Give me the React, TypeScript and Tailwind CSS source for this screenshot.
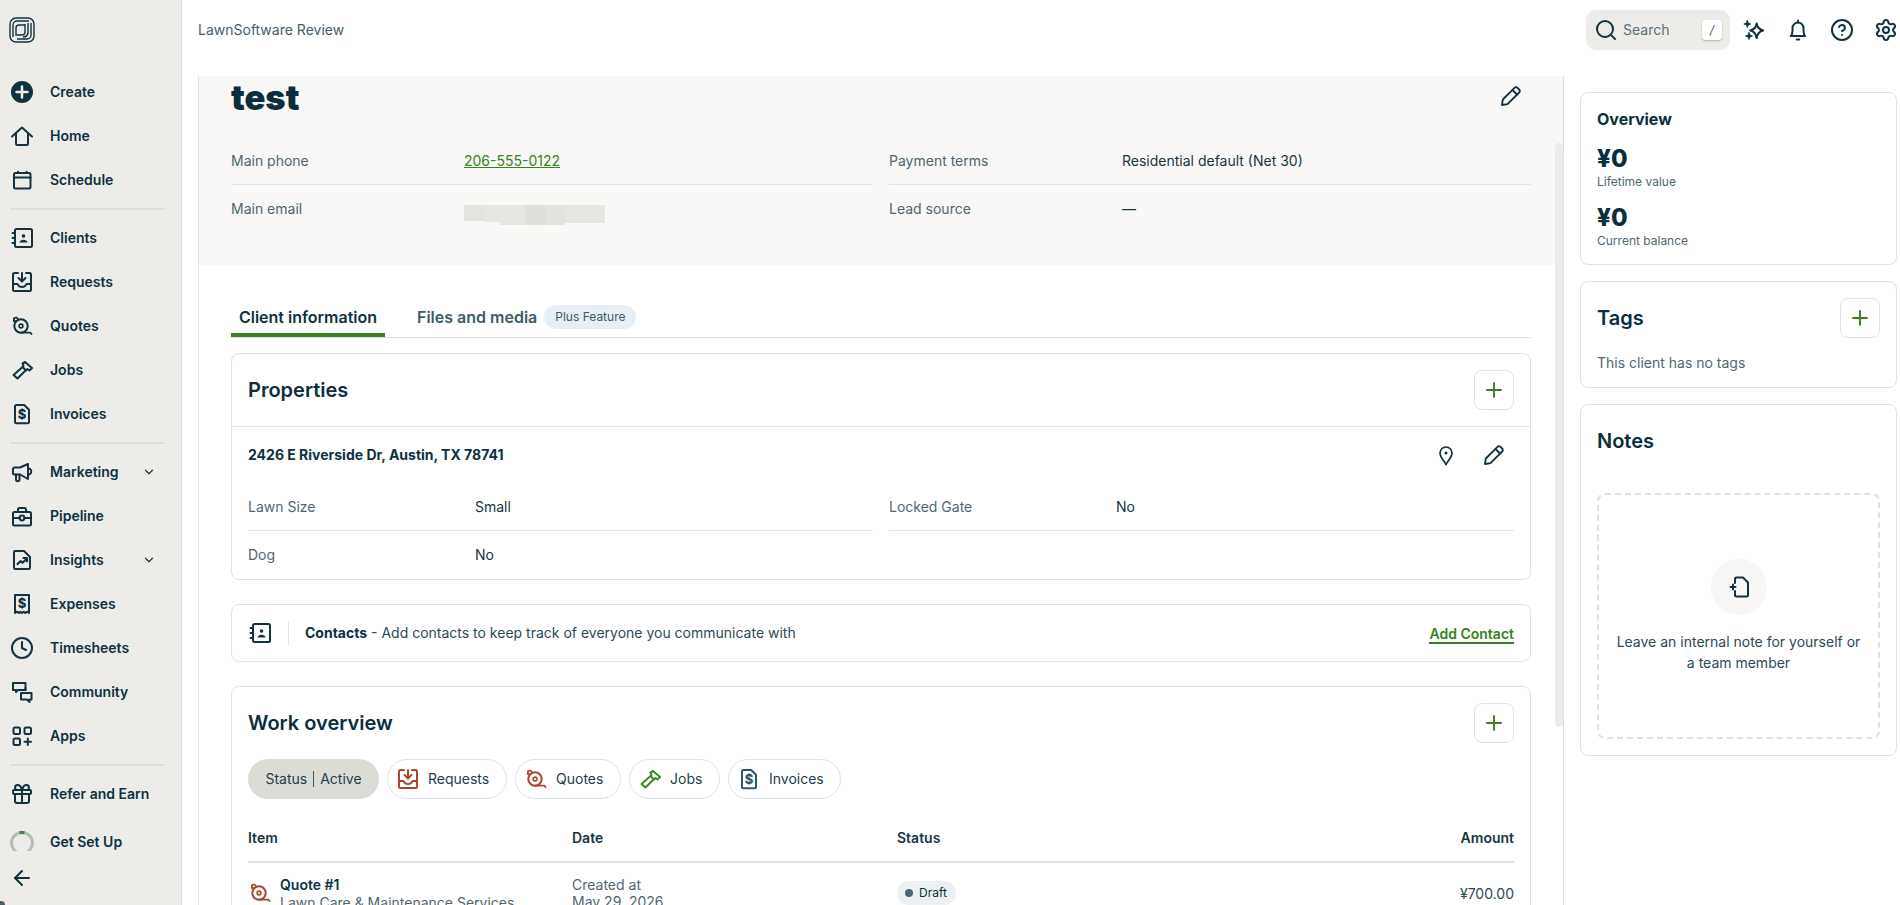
import { ReactNode } from 'react';
import { ChevronDown, CircleHelp, Clock, Gift, Search, Settings, ArrowLeft, Plus } from 'lucide-react';

type IconProps = { className?: string };

function Svg({ className = 'text-[#12323f]', children }: IconProps & { children: ReactNode }) {
  return (
    <svg
      viewBox="0 0 24 24"
      fill="none"
      stroke="currentColor"
      strokeWidth="2"
      strokeLinecap="round"
      strokeLinejoin="round"
      className={`w-6 h-6 shrink-0 ${className}`}
    >
      {children}
    </svg>
  );
}

const CreateIcon = ({ className }: IconProps) => (
  <Svg className={className}>
    <circle cx="12" cy="12" r="10" fill="currentColor" />
    <path d="M12 6.500v11M6.500 12h11" stroke="#edece9" strokeWidth="2.500" />
  </Svg>
);
const HomeIcon = ({ className }: IconProps) => (
  <Svg className={className}>
    <path d="M2 12.500 12 3.500l10 9" />
    <path d="M6 10v9.500A1.500 1.500 0 0 0 7.500 21h9a1.500 1.500 0 0 0 1.500-1.500V10" />
  </Svg>
);
const CalendarIcon = ({ className }: IconProps) => (
  <Svg className={className}>
    <rect x="4" y="5" width="16.500" height="15.500" rx="1.500" />
    <path d="M4 9.500h16.500M8 3.800V5M16.500 3.800V5" />
  </Svg>
);
const ClientsIcon = ({ className }: IconProps) => (
  <Svg className={className}>
    <rect x="5" y="3" width="17" height="18" rx="1.500" />
    <path d="M2.500 7h2M2.500 12h2M2.500 17h2" />
    <circle cx="13.500" cy="10" r="1.800" fill="currentColor" stroke="none" />
    <path d="M9.500 16.500c.4-2 2-2.800 4-2.800s3.600.8 4 2.800z" fill="currentColor" stroke="none" />
  </Svg>
);
const RequestsIcon = ({ className }: IconProps) => (
  <Svg className={className}>
    <path d="M8 3H4.500A1.500 1.500 0 0 0 3 4.500v15A1.500 1.500 0 0 0 4.500 21h15a1.500 1.500 0 0 0 1.500-1.500v-15A1.500 1.500 0 0 0 19.500 3H16" />
    <path d="M12 3v8M8.500 8l3.500 3.500L15.500 8" />
    <path d="M3 14h4.500c.7 2 2.300 3 4.500 3s3.800-1 4.500-3H21" />
  </Svg>
);
const QuotesIcon = ({ className }: IconProps) => (
  <Svg className={className}>
    <circle cx="11" cy="12" r="6.700" />
    <circle cx="11" cy="12" r="1.900" strokeWidth="1.600" />
    <path d="M11 18.700h9.500l1 1.300M6.300 7.200 3.800 7 4 4.200l2.500-.7 1.800 2" strokeWidth="1.800" />
  </Svg>
);
const JobsIcon = ({ className }: IconProps) => (
  <Svg className={className}>
    <path d="m12.500 5.300 2.500-1.300 7 6-2.500 2.500-2-1.500-1.500 1.500-3.500-3.500 1-1.200z" />
    <path d="M12 9.500 3.500 17l4 3.500 8-8" />
  </Svg>
);
const InvoicesIcon = ({ className }: IconProps) => (
  <Svg className={className}>
    <path d="M6.500 3h7.700L19 7.800v12a1.500 1.500 0 0 1-1.500 1.500h-11A1.500 1.500 0 0 1 5 19.800V4.500A1.500 1.500 0 0 1 6.500 3z" />
    <text x="12" y="16.700" textAnchor="middle" fontSize="13" fontWeight="800" fill="currentColor" stroke="none" fontFamily="Inter, sans-serif">$</text>
  </Svg>
);
const MarketingIcon = ({ className }: IconProps) => (
  <Svg className={className}>
    <path d="M3 9A1.500 1.500 0 0 1 4.500 7.500H10l8-3.500v15l-8-4.500H4.500A1.500 1.500 0 0 1 3 13z" />
    <path d="M6 14.500v5a1.700 1.700 0 0 0 3.500 0v-5M18.500 8.500a2.800 2.800 0 0 1 2.700 3 2.800 2.800 0 0 1-2.700 3" />
  </Svg>
);
const PipelineIcon = ({ className }: IconProps) => (
  <Svg className={className}>
    <rect x="3" y="8" width="18" height="13.500" rx="1.500" />
    <path d="M8 8V5.500A1.500 1.500 0 0 1 9.500 4h5A1.500 1.500 0 0 1 16 5.500V8M3 14h6.500M14.500 14H21" />
    <circle cx="12" cy="14" r="2.400" />
  </Svg>
);
const InsightsIcon = ({ className }: IconProps) => (
  <Svg className={className}>
    <path d="M5 3h9l6 6v10.500a1.500 1.500 0 0 1-1.500 1.500H5.500A1.500 1.500 0 0 1 4 19.500V4a1 1 0 0 1 1-1z" />
    <path d="m7.500 16 3-2.800 2 1.500 4.500-4.200M13.500 10h3.500v3.500" strokeWidth="2.200" />
  </Svg>
);
const ExpensesIcon = ({ className }: IconProps) => (
  <Svg className={className}>
    <path d="M5 3h14v18l-2-1.300-1.700 1.300-1.600-1.300-1.700 1.300-1.700-1.300L9 21l-2-1.300L5 21z" />
    <text x="12" y="15.800" textAnchor="middle" fontSize="13" fontWeight="800" fill="currentColor" stroke="none" fontFamily="Inter, sans-serif">$</text>
  </Svg>
);
const CommunityIcon = ({ className }: IconProps) => (
  <Svg className={className}>
    <path d="M3 3h12.500v7H8l-2 2v-2H3z" />
    <path d="M11 13h10.500v6.500H19.500V22l-2.500-2.500h-6z" />
    <path d="M15.500 8v2" />
  </Svg>
);
const AppsIcon = ({ className }: IconProps) => (
  <Svg className={className}>
    <rect x="3.500" y="3.500" width="6.500" height="6.500" rx="1.500" />
    <rect x="14.500" y="3.500" width="6.500" height="6.500" rx="1.500" />
    <rect x="3.500" y="14.500" width="6.500" height="6.500" rx="1.500" />
    <path d="M17.800 14.500v6.500M14.500 17.800H21" />
  </Svg>
);
const PinIcon = () => (
  <Svg>
    <path d="M12 21.500c-1.500-3-6-7-6-11.500a6 6 0 0 1 12 0c0 4.500-4.500 8.500-6 11.500z" strokeWidth="1.700" />
    <circle cx="12" cy="10" r="1.500" fill="currentColor" stroke="none" />
  </Svg>
);
const PencilIcon = () => (
  <Svg>
    <path d="M15.500 3.800a2.100 2.100 0 0 1 3 0l1.700 1.700a2.100 2.100 0 0 1 0 3L8.500 20.200 3 21l.8-5.500z" strokeWidth="1.800" />
    <path d="m13.500 6 4.500 4.500" strokeWidth="1.800" />
  </Svg>
);
const SparkleIcon = () => (
  <Svg>
    <path d="M14.700 5.500c.6 3.700 2.400 6 6.500 7-4.100 1-5.900 3.300-6.500 7.500-.6-4.200-2.400-6.500-6.500-7.500 4.100-1 5.900-3.300 6.500-7z" />
    <path d="m5.300 2.500 1 2.500 2.500 1-2.500 1-1 2.500-1-2.500-2.500-1 2.500-1zM7 14.500l1 2.500 2.500 1-2.500 1-1 2.500-1-2.500-2.500-1 2.500-1z" fill="currentColor" strokeWidth="0.800" />
  </Svg>
);
const BellIcon = () => (
  <Svg>
    <path d="M4.800 18c1.700-1.200 1.700-3.500 1.700-6v-2a5.500 5.500 0 0 1 11 0v2c0 2.500 0 4.800 1.700 6z" />
    <path d="M12 2.500v2M10.800 21.500h2.400" />
  </Svg>
);
const NoteIcon = () => (
  <Svg>
    <path d="M8 8V4a1.500 1.500 0 0 1 1.500-1.500h6.500l5 5V20a1.500 1.500 0 0 1-1.500 1.500h-10A1.500 1.500 0 0 1 8 20v-4" />
    <path d="M3.500 12h5M6 9.500v5" />
  </Svg>
);

const Logo = () => (
  <svg viewBox="0 0 26 26" fill="none" stroke="#12323f" strokeWidth="1.400" className="w-[26px] h-[26px]">
    <rect x="1" y="1" width="24" height="24" rx="6" />
    <path d="M4 20V8a4 4 0 0 1 4-4h12" />
    <path d="M8 22h10a4 4 0 0 0 4-4V6" />
    <path d="M16 7v8a3 3 0 0 1-3 3H7V11a3 3 0 0 1 3-3h6" />
    <path d="M19 6v10a5 5 0 0 1-5 4" />
  </svg>
);

type NavEntry = { label: string; icon: (p: IconProps) => ReactNode; chevron?: boolean };

const navGroups: NavEntry[][] = [
  [
    { label: 'Create', icon: CreateIcon },
    { label: 'Home', icon: HomeIcon },
    { label: 'Schedule', icon: CalendarIcon },
  ],
  [
    { label: 'Clients', icon: ClientsIcon },
    { label: 'Requests', icon: RequestsIcon },
    { label: 'Quotes', icon: QuotesIcon },
    { label: 'Jobs', icon: JobsIcon },
    { label: 'Invoices', icon: InvoicesIcon },
  ],
  [
    { label: 'Marketing', icon: MarketingIcon, chevron: true },
    { label: 'Pipeline', icon: PipelineIcon },
    { label: 'Insights', icon: InsightsIcon, chevron: true },
    { label: 'Expenses', icon: ExpensesIcon },
    { label: 'Timesheets', icon: ({ className }) => <Clock className={`w-6 h-6 ${className ?? 'text-[#12323f]'}`} /> },
    { label: 'Community', icon: CommunityIcon },
    { label: 'Apps', icon: AppsIcon },
  ],
  [{ label: 'Refer and Earn', icon: ({ className }) => <Gift className={`w-6 h-6 ${className ?? 'text-[#12323f]'}`} /> }],
];

function NavItem({ entry }: { entry: NavEntry }) {
  const Icon = entry.icon;
  return (
    <div className="h-11 flex items-center pl-[10px] pr-[25px]">
      <Icon />
      <span className="ml-4 text-sm font-semibold text-[#0e3140]">{entry.label}</span>
      {entry.chevron && <ChevronDown className="ml-auto w-[14px] h-[14px] text-[#12323f]" strokeWidth={2} />}
    </div>
  );
}

function Sidebar() {
  return (
    <aside className="relative w-[182px] shrink-0 h-full bg-[#edece9] border-r border-[#dedcd8] flex flex-col overflow-hidden">
      <div className="h-[70px] shrink-0 pl-[9px] pt-[17px]">
        <Logo />
      </div>
      {navGroups.map((group, i) => (
        <div key={i}>
          {i > 0 && <div className="ml-[10px] mr-[16px] my-[6px] h-[2px] bg-[#dfddd9]" />}
          {group.map((entry) => (
            <NavItem key={entry.label} entry={entry} />
          ))}
        </div>
      ))}
      <div className="mt-1 h-11 flex items-center pl-[10px]">
        <div className="w-6 h-[20px] -mt-[3px] overflow-hidden">
          <svg viewBox="0 0 24 24" fill="none" className="w-6 h-6">
            <circle cx="12" cy="12" r="10.500" stroke="#b4bdbc" strokeWidth="3" />
            <path d="M9.500 1.800a10.500 10.500 0 0 1 5 0" stroke="#3f8a28" strokeWidth="3" />
          </svg>
        </div>
        <span className="ml-4 text-sm font-semibold text-[#0e3140]">Get Set Up</span>
      </div>
      <div className="h-7 flex items-center pl-[10px]">
        <ArrowLeft className="w-6 h-6 text-[#12323f]" strokeWidth={2} />
      </div>
      <div className="absolute left-0 bottom-0 w-[5px] h-[4px] bg-[#4a5f68] rounded-tr-full" />
    </aside>
  );
}

function TopBar() {
  return (
    <header className="h-[76px] shrink-0 flex items-start pl-4 pr-[2px] bg-white">
      <div className="h-[60px] flex items-center text-sm text-[#45606b]">LawnSoftware Review</div>
      <div className="ml-auto mt-[10px] flex items-center gap-3">
        <div className="w-[144px] h-10 rounded-[10px] bg-[#edece9] flex items-center pl-2 pr-2">
          <Search className="w-6 h-6 text-[#12323f]" strokeWidth={2} />
          <span className="ml-[5px] text-sm text-[#5a717b]">Search</span>
          <span className="ml-auto w-5 h-5 rounded bg-white shadow-[0_1px_2px_rgba(0,0,0,0.25)] flex items-center justify-center text-xs italic text-[#3b5560]">/</span>
        </div>
        <div className="flex items-center gap-5">
          <SparkleIcon />
          <BellIcon />
          <CircleHelp className="w-6 h-6 text-[#12323f]" strokeWidth={2} />
          <Settings className="w-6 h-6 text-[#12323f]" strokeWidth={2} />
        </div>
      </div>
    </header>
  );
}

function PlusButton() {
  return (
    <button type="button" className="w-10 h-10 shrink-0 rounded-lg border border-[#dde2e5] bg-white flex items-center justify-center">
      <Plus className="w-6 h-6 text-[#3a8023]" strokeWidth={1.900} />
    </button>
  );
}

function Field({ label, labelWidth, border, children }: { label: string; labelWidth: string; border?: boolean; children: ReactNode }) {
  return (
    <div className={`h-12 flex items-center text-sm ${border ? 'border-b border-[#dde2e5]' : ''}`}>
      <div className={`${labelWidth} shrink-0 text-[#4f6670]`}>{label}</div>
      <div className="text-[#17353f]">{children}</div>
    </div>
  );
}

function BlurredEmail() {
  return (
    <div className="flex items-start mt-[12px]">
      <div className="w-5 h-[16px] bg-[#e3e3df]" />
      <div className="w-[16px] h-[17px] bg-[#e7e6e2]" />
      <div className="w-[25px] h-5 bg-[#e6e6e2]" />
      <div className="w-[20px] h-5 bg-[#dededa]" />
      <div className="w-[20px] h-5 bg-[#e2e2de]" />
      <div className="w-[40px] h-[18px] bg-[#e5e5e1]" />
    </div>
  );
}

function ChipButton({ icon, label, width }: { icon: ReactNode; label: string; width: string }) {
  return (
    <div className={`${width} h-10 pl-2 rounded-full border border-[#dde2e5] flex items-center gap-2 text-sm text-[#1e3d49]`}>
      {icon}
      <span>{label}</span>
    </div>
  );
}

function ClientPanel() {
  return (
    <div className="relative w-[1366px] shrink-0 ml-4 border-x border-[#dbe1e4] overflow-hidden bg-white">
      {/* Client header */}
      <div className="bg-[#f9f8f6] px-8 h-[189px]">
        <div className="h-[61px] flex items-start justify-between">
          <h1 className="mt-[2px] font-black text-[34.5px] leading-[40px] text-[#0a2e3c]">test</h1>
          <div className="mt-2 mr-[8px]">
            <PencilIcon />
          </div>
        </div>
        <div className="grid grid-cols-2 gap-x-4">
          <Field label="Main phone" labelWidth="w-[233px]" border>
            <span className="text-[#3a8023] underline">206-555-0122</span>
          </Field>
          <Field label="Payment terms" labelWidth="w-[233px]" border>
            Residential default (Net 30)
          </Field>
          <Field label="Main email" labelWidth="w-[233px]">
            <BlurredEmail />
          </Field>
          <Field label="Lead source" labelWidth="w-[233px]">
            —
          </Field>
        </div>
      </div>

      <div className="px-8 pt-8">
        {/* Tabs */}
        <div className="flex items-center h-[41px] border-b border-[#dde2e5]">
          <div className="w-[154px] h-10 pt-1 border-b-4 border-[#3a8023] flex items-center justify-center text-base font-semibold text-[#0e3140]">
            Client information
          </div>
          <div className="ml-8 text-base font-semibold text-[#3f5a66]">Files and media</div>
          <div className="ml-[7px] h-6 px-[11px] rounded-full bg-[#e8eff4] flex items-center text-xs text-[#3f5a66]">Plus Feature</div>
        </div>

        {/* Properties */}
        <section className="mt-[15px] rounded-lg border border-[#dde2e5]">
          <div className="h-[72px] px-4 flex items-center justify-between">
            <h2 className="text-xl font-semibold text-[#0a2e3c]">Properties</h2>
            <PlusButton />
          </div>
          <div className="border-t border-[#dde2e5] px-4">
            <div className="h-14 flex items-center justify-between">
              <span className="text-sm font-bold text-[#0e3140]">2426 E Riverside Dr, Austin, TX 78741</span>
              <div className="flex items-center gap-6 mr-2">
                <PinIcon />
                <PencilIcon />
              </div>
            </div>
            <div className="grid grid-cols-2 gap-x-4">
              <Field label="Lawn Size" labelWidth="w-[227px]" border>
                Small
              </Field>
              <Field label="Locked Gate" labelWidth="w-[227px]" border>
                No
              </Field>
              <Field label="Dog" labelWidth="w-[227px]">
                No
              </Field>
            </div>
          </div>
        </section>

        {/* Contacts */}
        <section className="mt-6 h-[58px] rounded-lg border border-[#dde2e5] pl-4 pr-4 flex items-center">
          <ClientsIcon className="text-[#12323f]" />
          <div className="ml-[16px] h-6 w-px bg-[#dde2e5]" />
          <p className="ml-4 text-sm text-[#2d4954]">
            <span className="font-bold text-[#0e3140]">Contacts</span> - Add contacts to keep track of everyone you communicate with
          </p>
          <a className="ml-auto mt-[2px] text-sm font-semibold text-[#3a8023] border-b-2 border-[#3a8023] leading-[17px]">Add Contact</a>
        </section>

        {/* Work overview */}
        <section className="mt-6 rounded-lg border border-[#dde2e5] px-4 pt-4 pb-8">
          <div className="flex items-center justify-between">
            <h2 className="text-xl font-semibold text-[#0a2e3c]">Work overview</h2>
            <PlusButton />
          </div>
          <div className="mt-4 flex items-center gap-2">
            <div className="w-[131px] h-10 rounded-full bg-[#dcdcd6] flex items-center justify-center text-sm text-[#1e3d49]">
              Status<span className="mx-[6px] w-px h-4 bg-[#3d5863]" />Active
            </div>
            <ChipButton icon={<RequestsIcon className="text-[#a8492f]" />} label="Requests" width="w-[120px]" />
            <ChipButton icon={<QuotesIcon className="text-[#a8492f]" />} label="Quotes" width="w-[106px]" />
            <ChipButton icon={<JobsIcon className="text-[#3f8a28]" />} label="Jobs" width="w-[91px]" />
            <ChipButton icon={<InvoicesIcon className="text-[#33536a]" />} label="Invoices" width="w-[113px]" />
          </div>

          <div className="mt-4 h-[48px] grid grid-cols-[324px_325px_1fr_auto] items-center border-b-2 border-[#dde2e5] text-sm font-semibold text-[#17353f]">
            <div>Item</div>
            <div>Date</div>
            <div>Status</div>
            <div>Amount</div>
          </div>
          <div className="pt-[13px] grid grid-cols-[324px_325px_1fr_auto] text-sm leading-[18px]">
            <div className="flex items-start">
              <QuotesIcon className="text-[#a8492f] mt-[5px]" />
              <div className="ml-2">
                <div className="font-semibold text-[#0e3140]">Quote #1</div>
                <div className="text-[#4f6670]">Lawn Care &amp; Maintenance Services</div>
              </div>
            </div>
            <div className="text-[#4f6670] leading-[17px]">
              <div>Created at</div>
              <div>May 29, 2026</div>
            </div>
            <div>
              <span className="inline-flex items-center h-6 w-[59px] pl-2 rounded-full bg-[#edf0f2] text-xs text-[#0e3140] mt-[5px]">
                <span className="w-2 h-2 rounded-full bg-[#4e6674] mr-[6px]" />
                Draft
              </span>
            </div>
            <div className="mt-[9px] text-[#2d4954]">¥700.00</div>
          </div>
        </section>
      </div>

      {/* Overlay scrollbar */}
      <div className="absolute right-0 top-[67px] w-2 h-[584px] rounded-sm bg-[#ebebe7]" />
    </div>
  );
}

function RightColumn() {
  return (
    <aside className="flex-1 pl-4 pr-[3px] pt-4 flex flex-col gap-4">
      <section className="rounded-lg border border-[#dde2e5] px-4 pt-[15px] pb-[15px]">
        <h3 className="text-base leading-[22px] font-bold text-[#0a2e3c]">Overview</h3>
        <div className="mt-[13px] text-2xl leading-[31px] font-extrabold text-[#0a2e3c]">¥0</div>
        <div className="text-xs leading-4 text-[#4f6670]">Lifetime value</div>
        <div className="mt-[12px] text-2xl leading-[31px] font-extrabold text-[#0a2e3c]">¥0</div>
        <div className="text-xs leading-4 text-[#4f6670]">Current balance</div>
      </section>
      <section className="rounded-lg border border-[#dde2e5] px-4 pt-4 pb-[14px]">
        <div className="flex items-center justify-between">
          <h3 className="text-xl font-semibold text-[#0a2e3c]">Tags</h3>
          <PlusButton />
        </div>
        <p className="mt-[15px] text-sm text-[#4f6670]">This client has no tags</p>
      </section>
      <section className="rounded-lg border border-[#dde2e5] px-4 pt-4 pb-4">
        <h3 className="h-10 flex items-center text-xl font-semibold text-[#0a2e3c]">Notes</h3>
        <div className="mt-[32px] h-[246px] rounded-lg border-2 border-dashed border-[#dde2e5] flex flex-col items-center justify-center px-3">
          <div className="w-14 h-14 rounded-full bg-[#f8f7f5] flex items-center justify-center">
            <NoteIcon />
          </div>
          <p className="mt-4 text-sm leading-[21px] text-center text-[#2d4954]">Leave an internal note for yourself or a team member</p>
        </div>
      </section>
    </aside>
  );
}

export default function App() {
  return (
    <div className="w-[1900px] h-[905px] overflow-hidden flex bg-white font-[family-name:Inter,sans-serif]">
      <Sidebar />
      <main className="flex-1 min-w-0 flex flex-col">
        <TopBar />
        <div className="flex flex-1 min-h-0">
          <ClientPanel />
          <RightColumn />
        </div>
      </main>
    </div>
  );
}
